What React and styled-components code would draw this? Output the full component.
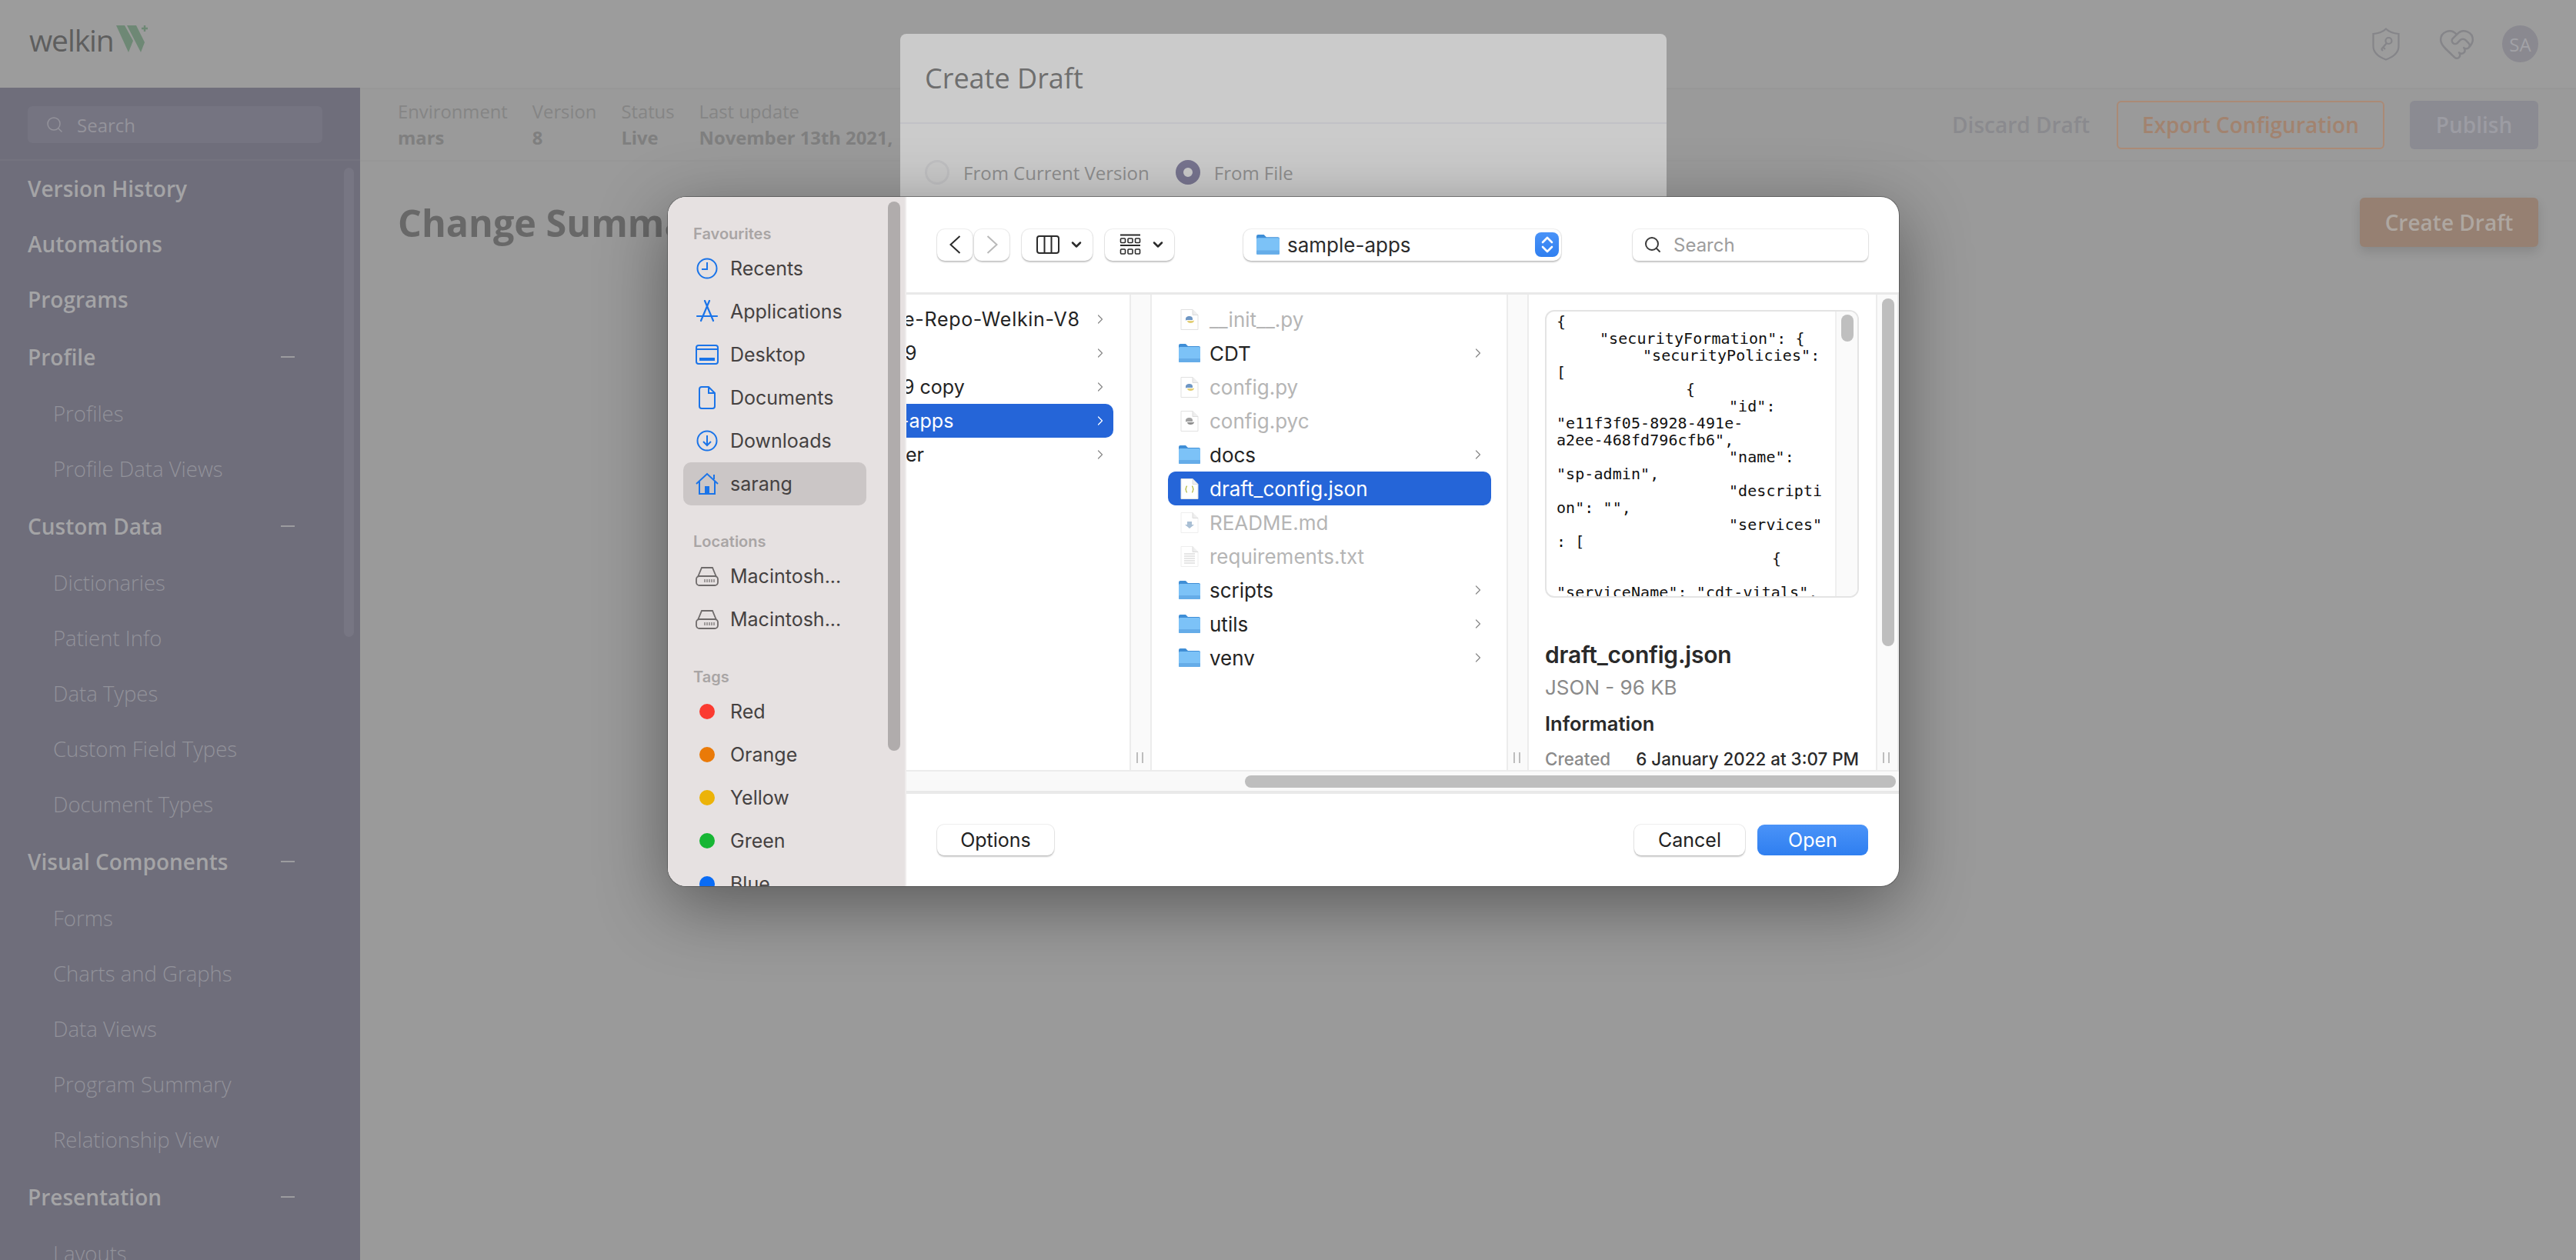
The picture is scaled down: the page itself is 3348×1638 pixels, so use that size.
import styled, { createGlobalStyle } from 'styled-components';
import { ChevronRight, ChevronDown, HeartHandshake, Search } from 'lucide-react';

const Global = createGlobalStyle`
  html, body {
    margin: 0;
    padding: 0;
    background: #9a9a9a;
  }
  * {
    box-sizing: border-box;
  }
`;

const Page = styled.div`
  position: relative;
  width: 3348px;
  height: 1638px;
  overflow: hidden;
  display: flex;
  flex-direction: column;
  background: #9a9a9a;
  font-family: 'Open Sans', sans-serif;
`;

/* ---------- app behind the dialogs ---------- */

const Header = styled.header`
  height: 114px;
  flex: none;
  display: flex;
  align-items: center;
  padding: 0 49px 0 38px;
  background: #9c9c9c;
`;

const LogoText = styled.span`
  font-size: 39px;
  line-height: 1;
  letter-spacing: -1.1px;
  color: #5e5e5e;
  margin: -12px 3px 0 0;
`;

const HeaderIcons = styled.div`
  margin-left: auto;
  display: flex;
  align-items: center;
  color: #858589;
`;

const Avatar = styled.div`
  width: 47px;
  height: 48px;
  margin-left: 34px;
  border-radius: 50%;
  background: #8a8990;
  color: #a2a2a7;
  font-size: 24px;
  display: flex;
  align-items: center;
  justify-content: center;
`;

const Body = styled.div`
  flex: 1;
  display: flex;
  min-height: 0;
`;

const Sidebar = styled.aside`
  position: relative;
  width: 468px;
  flex: none;
  background: #6f6e7b;
  overflow: hidden;
`;

const SearchWrap = styled.div`
  height: 95px;
  padding: 24px 49px 0 36px;
  border-bottom: 2px solid #74737f;
`;

const SideSearch = styled.div`
  height: 48px;
  display: flex;
  align-items: center;
  gap: 17px;
  padding-left: 23px;
  border-radius: 6px;
  background: #757481;
  color: #94939b;
  font-size: 24px;
`;

const NavHead = styled.div`
  height: 72px;
  display: flex;
  align-items: center;
  justify-content: space-between;
  padding: 0 85px 0 36px;
  margin-top: ${p => (p.$group ? '3px' : '0')};
  font-size: 28px;
  font-weight: 600;
  color: #a4a4a6;
`;

const Minus = styled.span`
  width: 18px;
  height: 2px;
  background: #9c9c9f;
`;

const SubList = styled.div`
  margin-top: 1px;
`;

const SubItem = styled.div`
  height: 72px;
  display: flex;
  align-items: center;
  padding-left: 69px;
  font-size: 27.5px;
  font-weight: 300;
  color: #92929a;
`;

const SideScroll = styled.div`
  position: absolute;
  left: 447px;
  top: 104px;
  width: 13px;
  height: 610px;
  border-radius: 7px;
  background: #777683;
`;

const Content = styled.main`
  flex: 1;
  min-width: 0;
`;

const InfoStrip = styled.div`
  height: 96px;
  display: flex;
  align-items: center;
  padding: 0 49px;
  border-bottom: 2px solid #979797;
  border-top: 2px solid #979797;
`;

const Info = styled.div`
  margin-right: 32px;
  font-size: 23.8px;
  line-height: 34px;
  color: #858585;
`;

const InfoValue = styled.div`
  font-weight: 700;
  color: #7f7f7f;
`;

const GhostAction = styled.span`
  margin-left: auto;
  font-size: 28px;
  font-weight: 600;
  color: #8a8a8e;
`;

const OutlineBtn = styled.button`
  width: 348px;
  height: 63px;
  margin-left: 35px;
  border: 2px solid #ab8a76;
  border-radius: 6px;
  background: transparent;
  color: #a2836f;
  font: 600 28px 'Open Sans', sans-serif;
`;

const FillBtn = styled.button`
  width: ${p => p.$w}px;
  height: ${p => p.$h}px;
  margin-left: ${p => p.$ml || 0}px;
  border: 0;
  border-radius: 6px;
  background: ${p => p.$bg};
  color: ${p => p.$fg};
  box-shadow: ${p => (p.$raised ? '0 6px 14px rgba(0,0,0,.12)' : 'none')};
  font: 600 28px 'Open Sans', sans-serif;
`;

const TitleRow = styled.div`
  display: flex;
  align-items: center;
  justify-content: space-between;
  padding: 47px 49px 0;
`;

const PageTitle = styled.h1`
  margin: 0;
  font-size: 48.5px;
  line-height: 64px;
  font-weight: 700;
  color: #686868;
`;

/* ---------- create draft modal, dimmed ---------- */

const DraftModal = styled.section`
  position: absolute;
  left: 1170px;
  top: 44px;
  width: 996px;
  height: 420px;
  border-radius: 8px;
  background: #cbcbcb;
`;

const DraftHead = styled.div`
  height: 117px;
  display: flex;
  align-items: center;
  padding: 0 32px;
  border-bottom: 2px solid #c1c1c6;
  font-size: 36px;
  color: #6e6e6e;
`;

const RadioRow = styled.div`
  display: flex;
  align-items: center;
  height: 126px;
  padding: 0 32px;
  font-size: 24px;
  color: #8e8e8e;
`;

const Radio = styled.span`
  width: 32px;
  height: 32px;
  flex: none;
  margin-right: 18px;
  border-radius: 50%;
  border: ${p => (p.$on ? '10px solid #77748f' : '3px solid #c0c0c2')};
  background: ${p => (p.$on ? '#cbcbcb' : '#c9c9c9')};
`;

const RadioLabel = styled.span`
  margin-right: 34px;
`;

/* ---------- mac file dialog ---------- */

const FileDialog = styled.div`
  position: absolute;
  left: 868px;
  top: 256px;
  width: 1600px;
  height: 896px;
  display: flex;
  border-radius: 24px;
  overflow: hidden;
  background: #fff;
  font-family: Inter, 'Liberation Sans', sans-serif;
`;

const DialogShadow = styled.div`
  position: absolute;
  left: 868px;
  top: 256px;
  width: 1600px;
  height: 896px;
  border-radius: 24px;
  box-shadow: 0 0 0 1px rgba(70, 70, 70, 0.6), 0 24px 90px rgba(0, 0, 0, 0.42);
`;

const Places = styled.nav`
  position: relative;
  width: 308px;
  flex: none;
  height: 100%;
  overflow: hidden;
  padding: 36px 0 0 20px;
  background: #e6e1e1;
`;

const PlacesScroll = styled.div`
  position: absolute;
  left: 286px;
  top: 6px;
  width: 16px;
  height: 714px;
  border-radius: 8px;
  background: #b0acac;
`;

const PlacesTitle = styled.div`
  height: 24px;
  line-height: 24px;
  margin: ${p => p.$mt}px 0 5px 13px;
  font-size: 20px;
  font-weight: 600;
  color: #a9a5a5;
`;

const Place = styled.div`
  width: 238px;
  height: 56px;
  display: flex;
  align-items: center;
  gap: 15px;
  padding-left: 16px;
  border-radius: 10px;
  background: ${p => (p.$active ? '#cbc6c6' : 'transparent')};
  font-size: 25px;
  color: #454141;
`;

const PlaceIcon = styled.span`
  width: 30px;
  height: 30px;
  flex: none;
  display: flex;
  align-items: center;
  justify-content: center;
`;

const Dot = styled.span`
  width: 20px;
  height: 20px;
  border-radius: 50%;
  background: ${p => p.$c};
`;

const Browser = styled.div`
  flex: 1;
  min-width: 0;
  display: flex;
  flex-direction: column;
  border-left: 2px solid #efecec;
`;

const Toolbar = styled.div`
  height: 127px;
  flex: none;
  display: flex;
  align-items: center;
  padding: 0 40px;
  border-bottom: 3px solid #e9e9e9;
`;

const ToolBtn = styled.div`
  width: ${p => p.$w}px;
  height: 41px;
  flex: none;
  margin-left: ${p => p.$ml || 0}px;
  display: flex;
  align-items: center;
  justify-content: center;
  border-radius: 10px;
  background: #fff;
  box-shadow: 0 0 0 1px rgba(0, 0, 0, 0.06), 0 1.5px 2px rgba(0, 0, 0, 0.2);
  color: ${p => p.$fg || '#2b2b2b'};
`;

const ViewBtn = styled(ToolBtn)`
  justify-content: flex-start;
  padding-left: 19px;
  gap: 12px;
`;

const PathSelect = styled(ToolBtn)`
  justify-content: flex-start;
  padding-left: 17px;
  gap: 10px;
  font-size: 26px;
  color: #2b2b2b;
`;

const Stepper = styled.span`
  margin-left: auto;
  margin-right: 3px;
  width: 31px;
  height: 32px;
  display: flex;
  align-items: center;
  justify-content: center;
  border-radius: 8px;
  background: linear-gradient(#4a93f8, #2f7ff0);
`;

const SearchField = styled(ToolBtn)`
  margin-left: auto;
  justify-content: flex-start;
  padding-left: 14px;
  gap: 15px;
  font-size: 24px;
  color: #9d9d9d;
  border-radius: 8px;
`;

const Columns = styled.div`
  height: 618px;
  flex: none;
  display: flex;
  overflow: hidden;
`;

const Col = styled.div`
  position: relative;
  width: ${p => p.$w}px;
  flex: none;
  padding: ${p => p.$pad};
  overflow: hidden;
`;

const Gutter = styled.div`
  position: relative;
  width: ${p => p.$w || 29}px;
  flex: none;
  background: #fafafa;
  border-left: 2px solid #ececec;
  border-right: 2px solid #ececec;
`;

const GripBars = styled.span`
  position: absolute;
  left: 7px;
  bottom: 9px;
  width: 9px;
  height: 14px;
  border-left: 2px solid #bdbdbd;
  border-right: 2px solid #bdbdbd;
`;

const Row = styled.div`
  height: 44px;
  display: flex;
  align-items: center;
  gap: ${p => p.$gap || 0}px;
  padding: ${p => p.$pad};
  border-radius: ${p => (p.$flatLeft ? '0 10px 10px 0' : '10px')};
  background: ${p => (p.$selected ? '#2565d8' : 'transparent')};
  color: ${p => (p.$selected ? '#fff' : p.$dim ? '#b5b5b5' : '#232323')};
  font-size: ${p => p.$size || 26}px;
  white-space: nowrap;
`;

const ClippedName = styled.span`
  margin-left: ${p => p.$shift}px;
  letter-spacing: ${p => p.$track || 0}px;
`;

const Chevron = styled(ChevronRight)`
  margin-left: auto;
  flex: none;
  color: ${p => (p.$light ? '#fff' : '#8a8a8a')};
`;

const PreviewBox = styled.div`
  position: relative;
  width: 408px;
  height: 374px;
  border: 2px solid #e4e4e4;
  border-radius: 12px;
  overflow: hidden;
`;

const PreviewText = styled.pre`
  margin: 0;
  padding: 2px 0 0 13px;
  font-family: 'DejaVu Sans Mono', monospace;
  font-size: 20px;
  letter-spacing: 0.08px;
  line-height: 22px;
  tab-size: 56px;
  color: #111;
`;

const PreviewRail = styled.div`
  position: absolute;
  top: 0;
  right: 0;
  width: 29px;
  height: 100%;
  background: #fafafa;
  border-left: 2px solid #efefef;
`;

const PreviewThumb = styled.div`
  width: 16px;
  height: 35px;
  margin: 4px 0 0 6px;
  border-radius: 8px;
  background: #bfbfbf;
`;

const FileName = styled.div`
  margin-top: 57px;
  font-size: 30px;
  line-height: 34px;
  font-weight: 600;
  letter-spacing: -0.2px;
  color: #2a2a2a;
`;

const FileKind = styled.div`
  margin-top: 10px;
  font-size: 26px;
  line-height: 32px;
  color: #8a8a8a;
`;

const FileSection = styled.div`
  margin-top: 15px;
  font-size: 25.5px;
  line-height: 32px;
  font-weight: 600;
  color: #2a2a2a;
`;

const FileMeta = styled.div`
  display: flex;
  justify-content: space-between;
  width: 408px;
  margin-top: 16px;
  font-size: 22.4px;
  line-height: 28px;
  font-weight: 500;
  color: #2a2a2a;
  white-space: nowrap;
`;

const MetaKey = styled.span`
  color: #8a8a8a;
`;

const VScroll = styled.div`
  position: absolute;
  left: 6px;
  top: 5px;
  width: 16px;
  height: 452px;
  border-radius: 8px;
  background: #bebebe;
`;

const HBar = styled.div`
  height: 27px;
  flex: none;
  padding: 5px 4px 0 440px;
  background: #f9f9f9;
  border-top: 2px solid #ececec;
`;

const HThumb = styled.div`
  height: 16px;
  border-radius: 8px;
  background: #bebebe;
`;

const Footer = styled.div`
  flex: 1;
  display: flex;
  align-items: center;
  gap: 16px;
  padding: 0 40px;
  border-top: 4px solid #e9e9e9;
`;

const DlgBtn = styled.div`
  width: ${p => p.$w}px;
  height: 40px;
  margin-left: ${p => (p.$push ? 'auto' : '0')};
  display: flex;
  align-items: center;
  justify-content: center;
  border-radius: 9px;
  font-size: 25px;
  color: ${p => (p.$primary ? '#fff' : '#222')};
  background: ${p => (p.$primary ? 'linear-gradient(#4a93f8, #2f7ff0)' : '#fff')};
  box-shadow: ${p => (p.$primary ? 'none' : '0 0 0 1px rgba(0,0,0,.06), 0 1.5px 2px rgba(0,0,0,.2)')};
`;

/* ---------- drawings ---------- */

const Logo = () => (
  <svg width="42" height="35" viewBox="0 0 42 35" style={{ marginTop: -14 }}>
    <polygon points="0,0 11,0 22,20 16,35" fill="#6e8875" />
    <polygon points="14,0 26,0 37,22 32,35" fill="#6e8875" />
    <path d="M37 0v8M33 4h8" stroke="#6e8875" strokeWidth="2.4" />
  </svg>
);

const ShieldKey = () => (
  <svg width="36" height="43" viewBox="0 0 36 43" fill="none" stroke="currentColor" strokeWidth="2.2">
    <path d="M18 1.5c4 4 10 6 16.500 6.500v16c0 8-7 14-16.500 17.500C8.500 38 1.500 32 1.500 24V8C8 7.500 14 5.500 18 1.500z" />
    <circle cx="21.500" cy="17" r="4" />
    <path d="M19 20l-7 8M14.500 25.500l2.500 2.500M12 28l2 2" />
  </svg>
);

const blue = '#1b74e8';

const ClockIcon = () => (
  <svg width="28" height="28" viewBox="0 0 28 28" fill="none" stroke={blue} strokeWidth="2">
    <circle cx="14" cy="14" r="12.500" />
    <path d="M14 6v9H7" />
  </svg>
);
const AppsIcon = () => (
  <svg width="30" height="30" viewBox="0 0 30 30" fill="none" stroke={blue} strokeWidth="2.2" strokeLinecap="round">
    <path d="M12 1l11 26M18 1L7 27M2 21h26" />
  </svg>
);
const DesktopIcon = () => (
  <svg width="30" height="26" viewBox="0 0 30 26" fill="none" stroke={blue} strokeWidth="2">
    <rect x="1" y="1" width="28" height="24" rx="3" />
    <path d="M1 6h28" />
    <rect x="5" y="17" width="20" height="4" fill={blue} stroke="none" />
  </svg>
);
const DocIcon = () => (
  <svg width="22" height="30" viewBox="0 0 22 30" fill="none" stroke={blue} strokeWidth="2">
    <path d="M13 1H4a3 3 0 0 0-3 3v22a3 3 0 0 0 3 3h14a3 3 0 0 0 3-3V9zM13 1v8h8" />
  </svg>
);
const DownIcon = () => (
  <svg width="28" height="28" viewBox="0 0 28 28" fill="none" stroke={blue} strokeWidth="2">
    <circle cx="14" cy="14" r="12.500" />
    <path d="M14 7v13M9 15l5 5 5-5" />
  </svg>
);
const HomeIcon = () => (
  <svg width="30" height="30" viewBox="0 0 30 30" fill="none" stroke={blue} strokeWidth="2">
    <path d="M1 15L15 2l14 13M5 12v16h20V12M24 9V3" />
    <rect x="12" y="18" width="6" height="10" fill={blue} stroke="none" />
  </svg>
);
const DriveIcon = () => (
  <svg width="30" height="26" viewBox="0 0 30 26" fill="none" stroke="#6f6b6b" strokeWidth="1.800">
    <path d="M3 14L8 2h14l5 12" />
    <rect x="1" y="13" width="28" height="12" rx="4" />
    <path d="M12 17v4M15 17v4M18 17v4M21 17v4M24 17v4" strokeWidth="1.200" />
  </svg>
);

const Folder = ({ size = 28 }) => (
  <svg width={size} height={size * 0.93} viewBox="0 0 28 26">
    <path d="M0 3a2 2 0 0 1 2-2h7l3 3h14a2 2 0 0 1 2 2v4H0z" fill="#3f8ed6" />
    <rect y="5" width="28" height="20" rx="1.500" fill="#7cc2f7" />
    <rect y="20" width="28" height="5" rx="1" fill="#65ace8" />
  </svg>
);

const FilePage = ({ children, dim }) => (
  <svg width="24" height="27" viewBox="0 0 24 27" style={{ margin: '0 2px' }}>
    <path d="M1 .5h15l7 7v19H1z" fill="#fff" stroke={dim ? '#eeeeee' : '#e1e1e1'} />
    <path d="M16 .5v7h7" fill="#eee" stroke="#dcdcdc" />
    {children}
  </svg>
);

const PyFile = ({ gray }) => (
  <FilePage>
    <path d="M7 13c0-3 2-4 5-4 2 0 4 1 4 3v2H9c-1 0-2 .5-2 1z" fill={gray ? '#a2a2a2' : '#6f97c4'} />
    <path d="M18 14c0 3-2 4-5 4-2 0-4-1-4-3h7c1 0 2-.5 2-1z" fill={gray ? '#8f8f8f' : '#e3cf77'} />
  </FilePage>
);

const JsonFile = () => (
  <FilePage>
    <path d="M9 10c-2 0-1 3-2 4 1 1 0 4 2 4M15 10c2 0 1 3 2 4-1 1 0 4-2 4" fill="none" stroke="#b8bd4a" strokeWidth="1.300" />
  </FilePage>
);

const MdFile = () => (
  <FilePage dim>
    <path d="M9 12h6v4h3l-6 5-6-5h3z" fill="#a9bfd4" />
  </FilePage>
);

const TxtFile = () => (
  <FilePage dim>
    <path d="M5 10h14M5 13h14M5 16h14M5 19h14M5 22h14" stroke="#dedede" strokeWidth="1.500" />
  </FilePage>
);

const NavArrow = ({ flip }) => (
  <svg width="15" height="24" viewBox="0 0 15 24" fill="none" stroke="currentColor" strokeWidth="2" style={flip ? { transform: 'scaleX(-1)' } : undefined}>
    <path d="M13.500 1L1.500 12l12 11" />
  </svg>
);

const StepperGlyph = () => (
  <svg width="18" height="24" viewBox="0 0 18 24" fill="none" stroke="#fff" strokeWidth="2.600" strokeLinecap="round" strokeLinejoin="round">
    <path d="M3 9l6-6 6 6M3 15l6 6 6-6" />
  </svg>
);

const ColumnsGlyph = () => (
  <svg width="30" height="24" viewBox="0 0 30 24" fill="none" stroke="#2b2b2b" strokeWidth="2">
    <rect x="1" y="1" width="28" height="22" rx="3" />
    <path d="M10.500 1v22M19.500 1v22" />
  </svg>
);

const GroupGlyph = () => (
  <svg width="28" height="28" viewBox="0 0 28 28" fill="none" stroke="#2b2b2b" strokeWidth="1.600">
    <path d="M1 1.500h26M1 15h26" strokeWidth="1.800" />
    <rect x="1.500" y="6" width="6" height="5.500" rx="1" />
    <rect x="11" y="6" width="6" height="5.500" rx="1" />
    <rect x="20.500" y="6" width="6" height="5.500" rx="1" />
    <rect x="1.500" y="20" width="6" height="6" rx="1" />
    <rect x="11" y="20" width="6" height="6" rx="1" />
    <rect x="20.500" y="20" width="6" height="6" rx="1" />
  </svg>
);

/* ---------- data ---------- */

const topItems = ['Version History', 'Automations', 'Programs'];

const navGroups = [
  { title: 'Profile', items: ['Profiles', 'Profile Data Views'] },
  { title: 'Custom Data', items: ['Dictionaries', 'Patient Info', 'Data Types', 'Custom Field Types', 'Document Types'] },
  { title: 'Visual Components', items: ['Forms', 'Charts and Graphs', 'Data Views', 'Program Summary', 'Relationship View'] },
  { title: 'Presentation', items: ['Layouts'] },
];

const favourites = [
  ['Recents', <ClockIcon />],
  ['Applications', <AppsIcon />],
  ['Desktop', <DesktopIcon />],
  ['Documents', <DocIcon />],
  ['Downloads', <DownIcon />],
  ['sarang', <HomeIcon />, true],
];

const tags = [
  ['Red', '#fb3a30'],
  ['Orange', '#ea7a08'],
  ['Yellow', '#ecb308'],
  ['Green', '#17b634'],
  ['Blue', '#0a6cf5'],
];

// the parent column is scrolled sideways, so names are cut at its left edge
const parentRows = [
  { name: 'e-Repo-Welkin-V8', shift: -4, track: 0.7 },
  { name: '9', shift: -2 },
  { name: '9 copy', shift: -5 },
  { name: '-apps', shift: -8, selected: true },
  { name: 'er', shift: -1 },
];

const files = [
  { name: '__init__.py', icon: <PyFile />, dim: true },
  { name: 'CDT', icon: <Folder />, dir: true },
  { name: 'config.py', icon: <PyFile />, dim: true },
  { name: 'config.pyc', icon: <PyFile gray />, dim: true },
  { name: 'docs', icon: <Folder />, dir: true },
  { name: 'draft_config.json', icon: <JsonFile />, selected: true },
  { name: 'README.md', icon: <MdFile />, dim: true },
  { name: 'requirements.txt', icon: <TxtFile />, dim: true },
  { name: 'scripts', icon: <Folder />, dir: true },
  { name: 'utils', icon: <Folder />, dir: true },
  { name: 'venv', icon: <Folder />, dir: true },
];

const previewText = `{
\t"securityFormation": {
\t\t"securityPolicies":
[
\t\t\t{
\t\t\t\t"id":
"e11f3f05-8928-491e-
a2ee-468fd796cfb6",
\t\t\t\t"name":
"sp-admin",
\t\t\t\t"descripti
on": "",
\t\t\t\t"services"
: [
\t\t\t\t\t{

"serviceName": "cdt-vitals",`;

export default function App() {
  return (
    <Page>
      <Global />
      <Header>
        <LogoText>welkin</LogoText>
        <Logo />
        <HeaderIcons>
          <ShieldKey />
          <HeartHandshake size={50} strokeWidth={1.2} style={{ marginLeft: 49 }} />
          <Avatar>SA</Avatar>
        </HeaderIcons>
      </Header>

      <Body>
        <Sidebar>
          <SearchWrap>
            <SideSearch>
              <Search size={24} strokeWidth={1.5} />
              Search
            </SideSearch>
          </SearchWrap>
          <SideScroll />
          {topItems.map(t => (
            <NavHead key={t}>{t}</NavHead>
          ))}
          {navGroups.map(g => (
            <div key={g.title}>
              <NavHead $group>
                {g.title}
                <Minus />
              </NavHead>
              <SubList>
                {g.items.map(i => (
                  <SubItem key={i}>{i}</SubItem>
                ))}
              </SubList>
            </div>
          ))}
        </Sidebar>

        <Content>
          <InfoStrip>
            <Info>
              Environment
              <InfoValue>mars</InfoValue>
            </Info>
            <Info>
              Version
              <InfoValue>8</InfoValue>
            </Info>
            <Info>
              Status
              <InfoValue>Live</InfoValue>
            </Info>
            <Info>
              Last update
              <InfoValue>November 13th 2021,</InfoValue>
            </Info>
            <GhostAction>Discard Draft</GhostAction>
            <OutlineBtn>Export Configuration</OutlineBtn>
            <FillBtn $w={167} $h={63} $ml={33} $bg="#8b8b92" $fg="#9c9ca3">
              Publish
            </FillBtn>
          </InfoStrip>
          <TitleRow>
            <PageTitle>Change Summary</PageTitle>
            <FillBtn $w={232} $h={64} $bg="#968072" $fg="#aea7a1" $raised>
              Create Draft
            </FillBtn>
          </TitleRow>
        </Content>
      </Body>

      <DraftModal>
        <DraftHead>Create Draft</DraftHead>
        <RadioRow>
          <Radio />
          <RadioLabel>From Current Version</RadioLabel>
          <Radio $on />
          <span>From File</span>
        </RadioRow>
      </DraftModal>

      <DialogShadow />
      <FileDialog>
        <Places>
          <PlacesScroll />
          <PlacesTitle $mt={0}>Favourites</PlacesTitle>
          {favourites.map(([label, icon, active]) => (
            <Place key={label} $active={active}>
              <PlaceIcon>{icon}</PlaceIcon>
              {label}
            </Place>
          ))}
          <PlacesTitle $mt={35}>Locations</PlacesTitle>
          <Place>
            <PlaceIcon>
              <DriveIcon />
            </PlaceIcon>
            Macintosh...
          </Place>
          <Place>
            <PlaceIcon>
              <DriveIcon />
            </PlaceIcon>
            Macintosh...
          </Place>
          <PlacesTitle $mt={35}>Tags</PlacesTitle>
          {tags.map(([label, c]) => (
            <Place key={label}>
              <PlaceIcon>
                <Dot $c={c} />
              </PlaceIcon>
              {label}
            </Place>
          ))}
        </Places>

        <Browser>
          <Toolbar>
            <ToolBtn $w={46}>
              <NavArrow />
            </ToolBtn>
            <ToolBtn $w={46} $ml={2} $fg="#b9b9b9">
              <NavArrow flip />
            </ToolBtn>
            <ViewBtn $w={92} $ml={16}>
              <ColumnsGlyph />
              <ChevronDown size={20} strokeWidth={3} />
            </ViewBtn>
            <ViewBtn $w={90} $ml={16}>
              <GroupGlyph />
              <ChevronDown size={20} strokeWidth={3} />
            </ViewBtn>
            <PathSelect $w={413} $ml={90}>
              <Folder size={30} />
              sample-apps
              <Stepper>
                <StepperGlyph />
              </Stepper>
            </PathSelect>
            <SearchField $w={306}>
              <Search size={24} strokeWidth={2} color="#3a3a3a" />
              Search
            </SearchField>
          </Toolbar>

          <Columns>
            <Col $w={290} $pad="10px 21px 0 0">
              {parentRows.map(r => (
                <Row key={r.name} $size={25} $pad="0 7px 0 0" $selected={r.selected} $flatLeft>
                  <ClippedName $shift={r.shift} $track={r.track}>
                    {r.name}
                  </ClippedName>
                  <Chevron size={20} strokeWidth={1.5} $light={r.selected} />
                </Row>
              ))}
            </Col>
            <Gutter>
              <GripBars />
            </Gutter>
            <Col $w={461} $pad="10px 20px 0 21px">
              {files.map(f => (
                <Row key={f.name} $gap={12} $pad="0 7px 0 14px" $selected={f.selected} $dim={f.dim}>
                  {f.icon}
                  {f.name}
                  {f.dir && <Chevron size={20} strokeWidth={1.5} />}
                </Row>
              ))}
            </Col>
            <Gutter $w={29}>
              <GripBars />
            </Gutter>
            <Col $w={451} $pad="20px 0 0 21px">
              <PreviewBox>
                <PreviewText>{previewText}</PreviewText>
                <PreviewRail>
                  <PreviewThumb />
                </PreviewRail>
              </PreviewBox>
              <FileName>draft_config.json</FileName>
              <FileKind>JSON - 96 KB</FileKind>
              <FileSection>Information</FileSection>
              <FileMeta>
                <MetaKey>Created</MetaKey>
                <span>6 January 2022 at 3:07 PM</span>
              </FileMeta>
            </Col>
            <Gutter $w={30}>
              <VScroll />
              <GripBars />
            </Gutter>
          </Columns>

          <HBar>
            <HThumb />
          </HBar>

          <Footer>
            <DlgBtn $w={152}>Options</DlgBtn>
            <DlgBtn $w={144} $push>
              Cancel
            </DlgBtn>
            <DlgBtn $w={144} $primary>
              Open
            </DlgBtn>
          </Footer>
        </Browser>
      </FileDialog>
    </Page>
  );
}
